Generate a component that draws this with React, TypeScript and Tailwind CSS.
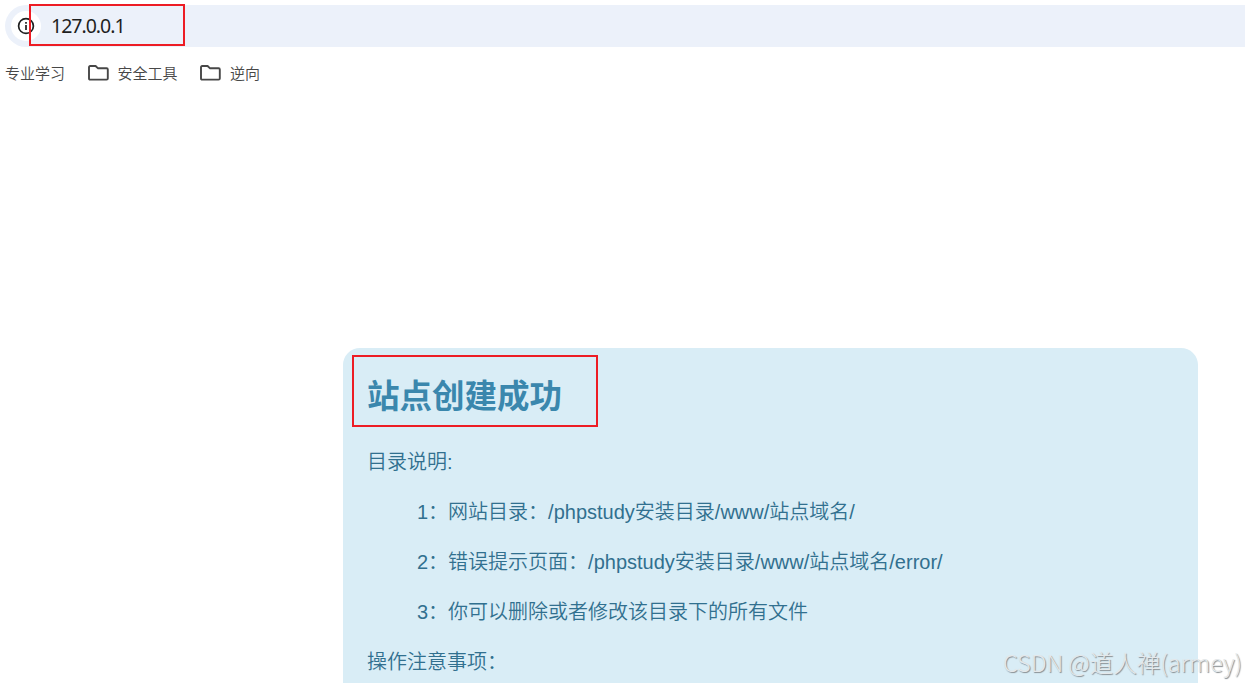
const bookmarks = ['安全工具', '逆向'];

const directories = [
  '1：网站目录：/phpstudy安装目录/www/站点域名/',
  '2：错误提示页面：/phpstudy安装目录/www/站点域名/error/',
  '3：你可以删除或者修改该目录下的所有文件',
];

const InfoIcon = () => (
  <svg className="w-[18px] h-[18px]" viewBox="0 0 18 18" fill="none" stroke="#1f1f1f">
    <circle cx="9" cy="9" r="7.4" strokeWidth="1.7" />
    <path d="M9 8v5M9 5v1.8" strokeWidth="1.7" />
  </svg>
);

const FolderIcon = () => (
  <svg className="w-[21px] h-4 shrink-0 relative -top-px" viewBox="0 0 21 16" fill="none" stroke="#474747" strokeWidth="1.9" strokeLinejoin="round">
    <path d="M1 2.2Q1 1 2.2 1H7.6L9.8 3.2H18.6Q19.8 3.2 19.8 4.4V13.4Q19.8 14.6 18.6 14.6H2.2Q1 14.6 1 13.4Z" />
  </svg>
);

const AddressBar = () => (
  <div className="relative ml-[5px] h-[42px] rounded-l-full bg-[#ecf1fa] flex items-center">
    <div className="ml-[6px] w-[30px] h-[30px] rounded-full bg-white flex items-center justify-center">
      <InfoIcon />
    </div>
    <span className="ml-[10px] text-[19.5px] leading-none tracking-[-1px] text-[#1f1f1f] font-['Noto_Sans',sans-serif]">
      127.0.0.1
    </span>
    <div className="absolute left-6 -top-px w-[156px] h-[42px] border-2 border-[#ed1c24]" />
  </div>
);

const BookmarksBar = () => (
  <div className="mt-[15px] pl-[5px] h-6 flex items-center text-[15px] leading-6 font-[350] text-[#474747]">
    <span>专业学习</span>
    {bookmarks.map((name) => (
      <div key={name} className="ml-[22.5px] flex items-center gap-[9px]">
        <FolderIcon />
        <span>{name}</span>
      </div>
    ))}
  </div>
);

export default function App() {
  return (
    <div className="relative h-[683px] overflow-hidden bg-white pt-[5px] font-['Liberation_Sans','Noto_Sans_CJK_SC',sans-serif]">
      <AddressBar />
      <BookmarksBar />

      <main className="mt-[262px] ml-[343px] w-[855px] h-[400px] rounded-[17px] bg-[#d9edf6] pl-6 pt-6 text-[20px] leading-[30px] font-[350] text-[#31708f]">
        <div className="relative h-[50px]">
          <h1 className="text-[32.5px] leading-[50px] font-bold text-[#3a87ad]">站点创建成功</h1>
          <div className="absolute -left-[15px] -top-[17px] w-[246px] h-[72px] border-2 border-[#ed1c24]" />
        </div>
        <p className="mt-[25px]">目录说明:</p>
        <ul className="pl-[50px]">
          {directories.map((item) => (
            <li key={item} className="mt-5">
              {item}
            </li>
          ))}
        </ul>
        <p className="mt-5">操作注意事项：</p>
      </main>

      {/* Watermark */}
      <span className="absolute right-[3px] top-[645px] text-[23.5px] leading-[34px] whitespace-nowrap text-[#e4e8ea] [text-shadow:1px_1px_1px_#858b8f] font-['Noto_Sans_CJK_SC',sans-serif] font-light">
        CSDN @道人禅(armey)
      </span>
    </div>
  );
}
